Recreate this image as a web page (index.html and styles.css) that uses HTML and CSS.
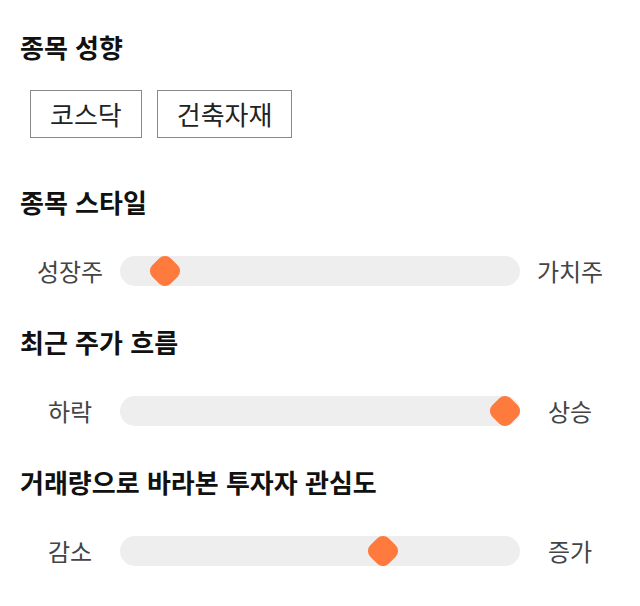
FILE: index.html
```html
<!DOCTYPE html>
<html lang="ko">
<head>
  <meta charset="UTF-8">
  <meta name="viewport" content="width=device-width, initial-scale=1.0">
  <link rel="stylesheet" href="styles.css">
  <title>종목 분석</title>
</head>
<body>
  <!-- 종목 성향 태그 -->
  <section class="trait">
    <h2 class="trait-title">종목 성향</h2>
    <div class="tags">
      <span class="tag">코스닥</span>
      <span class="tag">건축자재</span>
    </div>
  </section>

  <!-- 슬라이더 형태의 지표들 -->
  <section class="trait">
    <h2 class="trait-title">종목 스타일</h2>
    <div class="scale">
      <span class="scale-label">성장주</span>
      <div class="track"><div class="rail"><span class="thumb" style="left: 8%"></span></div></div>
      <span class="scale-label">가치주</span>
    </div>
  </section>

  <section class="trait">
    <h2 class="trait-title">최근 주가 흐름</h2>
    <div class="scale">
      <span class="scale-label">하락</span>
      <div class="track"><div class="rail"><span class="thumb" style="left: 100%"></span></div></div>
      <span class="scale-label">상승</span>
    </div>
  </section>

  <section class="trait">
    <h2 class="trait-title">거래량으로 바라본 투자자 관심도</h2>
    <div class="scale">
      <span class="scale-label">감소</span>
      <div class="track"><div class="rail"><span class="thumb" style="left: 67%"></span></div></div>
      <span class="scale-label">증가</span>
    </div>
  </section>
</body>
</html>
```
FILE: styles.css
```css
body {
  margin: 0;
  padding: 32px 20px 0;
  font-family: "Noto Sans CJK KR", "Noto Sans", sans-serif;
  color: #111;
  background: #fff;
}

.trait + .trait {
  margin-top: 41px;
}

.trait-title {
  margin: 0 0 28px;
  font-size: 26px;
  font-weight: 700;
  line-height: 30px;
}

.tags {
  display: flex;
  gap: 15px;
  margin-left: 10px;
  padding-bottom: 8px;
}

.tag {
  border: 1px solid #888;
  padding: 0 19px;
  font-size: 26px;
  line-height: 46px;
  color: #222;
}

.scale {
  display: flex;
  align-items: center;
  padding-top: 11px;
}

.scale-label {
  width: 100px;
  text-align: center;
  font-size: 24px;
  line-height: 30px;
  color: #444;
}

.track {
  flex: 1;
  height: 30px;
  border-radius: 15px;
  background: #eee;
}

.rail {
  position: relative;
  height: 100%;
  margin: 0 15px;
}

.thumb {
  position: absolute;
  top: 50%;
  width: 26px;
  height: 26px;
  border-radius: 8px;
  background: #ff7a3d;
  transform: translate(-50%, -50%) rotate(45deg);
}
```
